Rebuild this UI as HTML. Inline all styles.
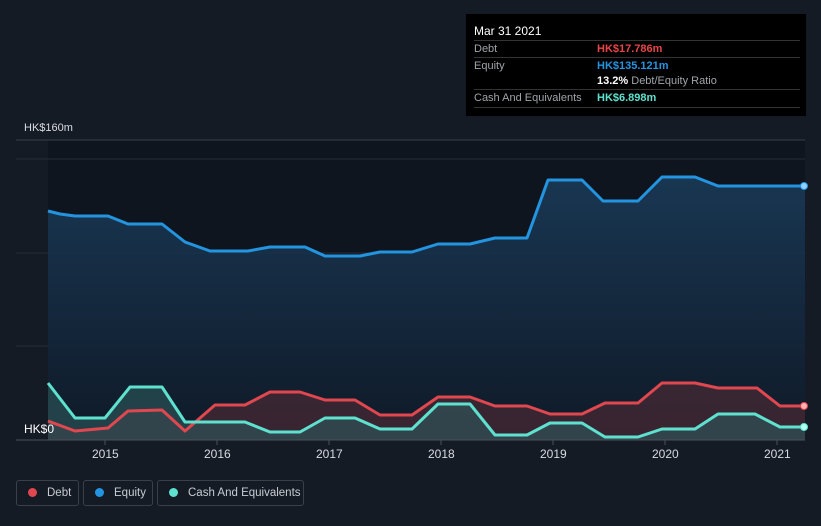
<!DOCTYPE html><html><head><style>
body{margin:0;width:821px;height:526px;background:#151b25;font-family:"Liberation Sans",sans-serif;overflow:hidden;position:relative}
.tt{position:absolute;left:466px;top:14px;width:340px;height:102px;background:#000;color:#fff;font-size:11px}
.tt .r{position:absolute;left:8px;right:6px;height:17px;border-top:1px solid #333;line-height:17px;color:#a0a4aa}
.tt b{position:absolute;left:123px;font-weight:bold}
.leg{position:absolute;top:480px;height:26px;border:1px solid #3a404a;border-radius:3px;color:#c8ccd2;font-size:11.5px;line-height:24px;box-sizing:border-box;white-space:nowrap}
.leg i{display:inline-block;width:9px;height:9px;border-radius:50%;margin:0 10px 0 11px;vertical-align:-1px}
.ax{position:absolute;top:447px;color:#d8dbe0;font-size:12px}
</style></head><body>
<svg width="821" height="526" style="position:absolute;left:0;top:0">
<defs><linearGradient id="g" x1="0" y1="0" x2="0" y2="1"><stop offset="0" stop-color="#1a3a58"/><stop offset="1" stop-color="#0f1a28"/></linearGradient></defs>
<rect x="48" y="140" width="757" height="300" fill="#0f151e"/>
<line x1="16" y1="140" x2="805" y2="140" stroke="#39404a"/>
<line x1="16" y1="159" x2="805" y2="159" stroke="#262d38"/>
<line x1="16" y1="253" x2="805" y2="253" stroke="#262d38"/>
<line x1="16" y1="346" x2="805" y2="346" stroke="#262d38"/>
<polygon fill="url(#g)" opacity="0.9" points="48,440 48,211 60,214 75,216 108,216 128,224 162,224 185,242 210,251 248,251 270,247 305,247 325,256 360,256 380,252 412,252 438,244 470,244 495,238 527,238 548,180 582,180 603,201 638,201 662,177 695,177 718,186 760,186 805,186 805,440"/>
<polygon fill="#4a2a35" opacity="0.7" points="48,440 48,421 75,431 108,428 128,411 162,410 185,431 215,405 245,405 270,392 300,392 325,400 355,400 380,415 412,415 438,397 470,397 495,406 527,406 550,414 582,414 605,403 638,403 662,383 695,383 718,388 757,388 780,406 805,406 805,440"/>
<polygon fill="#2e5a5e" opacity="0.6" points="48,440 48,383 75,418 105,418 130,387 162,387 185,422 245,422 270,432 300,432 325,418 355,418 380,429 412,429 438,404 470,404 495,435 527,435 550,423 582,423 605,437 638,437 662,429 695,429 718,414 755,414 780,427 805,427 805,440"/>
<g fill="none" stroke-width="3" stroke-linejoin="round">
<polyline stroke="#2394e0" points="48,211 60,214 75,216 108,216 128,224 162,224 185,242 210,251 248,251 270,247 305,247 325,256 360,256 380,252 412,252 438,244 470,244 495,238 527,238 548,180 582,180 603,201 638,201 662,177 695,177 718,186 760,186 805,186"/>
<polyline stroke="#e0474f" points="48,421 75,431 108,428 128,411 162,410 185,431 215,405 245,405 270,392 300,392 325,400 355,400 380,415 412,415 438,397 470,397 495,406 527,406 550,414 582,414 605,403 638,403 662,383 695,383 718,388 757,388 780,406 805,406"/>
<polyline stroke="#5ee2cf" points="48,383 75,418 105,418 130,387 162,387 185,422 245,422 270,432 300,432 325,418 355,418 380,429 412,429 438,404 470,404 495,435 527,435 550,423 582,423 605,437 638,437 662,429 695,429 718,414 755,414 780,427 805,427"/>
</g>
<circle cx="804" cy="186" r="3.5" fill="#8fd0ff" stroke="#2394e0"/>
<circle cx="804" cy="406" r="3.5" fill="#ffb0b0" stroke="#e0474f"/>
<circle cx="804" cy="427" r="3.5" fill="#b0fff0" stroke="#5ee2cf"/>
<line x1="16" y1="440" x2="805" y2="440" stroke="#4a505a"/>
<g stroke="#4a505a"><line x1="105" y1="440" x2="105" y2="445"/><line x1="217" y1="440" x2="217" y2="445"/><line x1="329" y1="440" x2="329" y2="445"/><line x1="441" y1="440" x2="441" y2="445"/><line x1="553" y1="440" x2="553" y2="445"/><line x1="665" y1="440" x2="665" y2="445"/><line x1="777" y1="440" x2="777" y2="445"/></g>
</svg>
<div style="position:absolute;left:24px;top:122px;color:#d8dbe0;font-size:11px">HK$160m</div>
<div style="position:absolute;left:24px;top:422px;color:#fff;font-size:12px">HK$0</div>
<div class="ax" style="left:92px">2015</div><div class="ax" style="left:204px">2016</div><div class="ax" style="left:316px">2017</div><div class="ax" style="left:428px">2018</div><div class="ax" style="left:540px">2019</div><div class="ax" style="left:652px">2020</div><div class="ax" style="left:764px">2021</div>
<div class="tt">
<div style="position:absolute;left:8px;top:10px;font-size:12px">Mar 31 2021</div>
<div class="r" style="top:26px">Debt<b style="color:#e84548">HK$17.786m</b></div>
<div class="r" style="top:43px">Equity<b style="color:#2394e0">HK$135.121m</b></div>
<div class="r" style="top:59px;border-top:none"><b style="color:#fff">13.2% <span style="color:#a0a4aa;font-weight:normal">Debt/Equity Ratio</span></b></div>
<div class="r" style="top:75px">Cash And Equivalents<b style="color:#5ee2cf">HK$6.898m</b></div>
<div class="r" style="top:93px;height:0"></div>
</div>
<div class="leg" style="left:16px;width:63px"><i style="background:#e0474f"></i>Debt</div>
<div class="leg" style="left:83px;width:70px"><i style="background:#2394e0"></i>Equity</div>
<div class="leg" style="left:157px;width:147px"><i style="background:#5ee2cf"></i>Cash And Equivalents</div>
</body></html>
